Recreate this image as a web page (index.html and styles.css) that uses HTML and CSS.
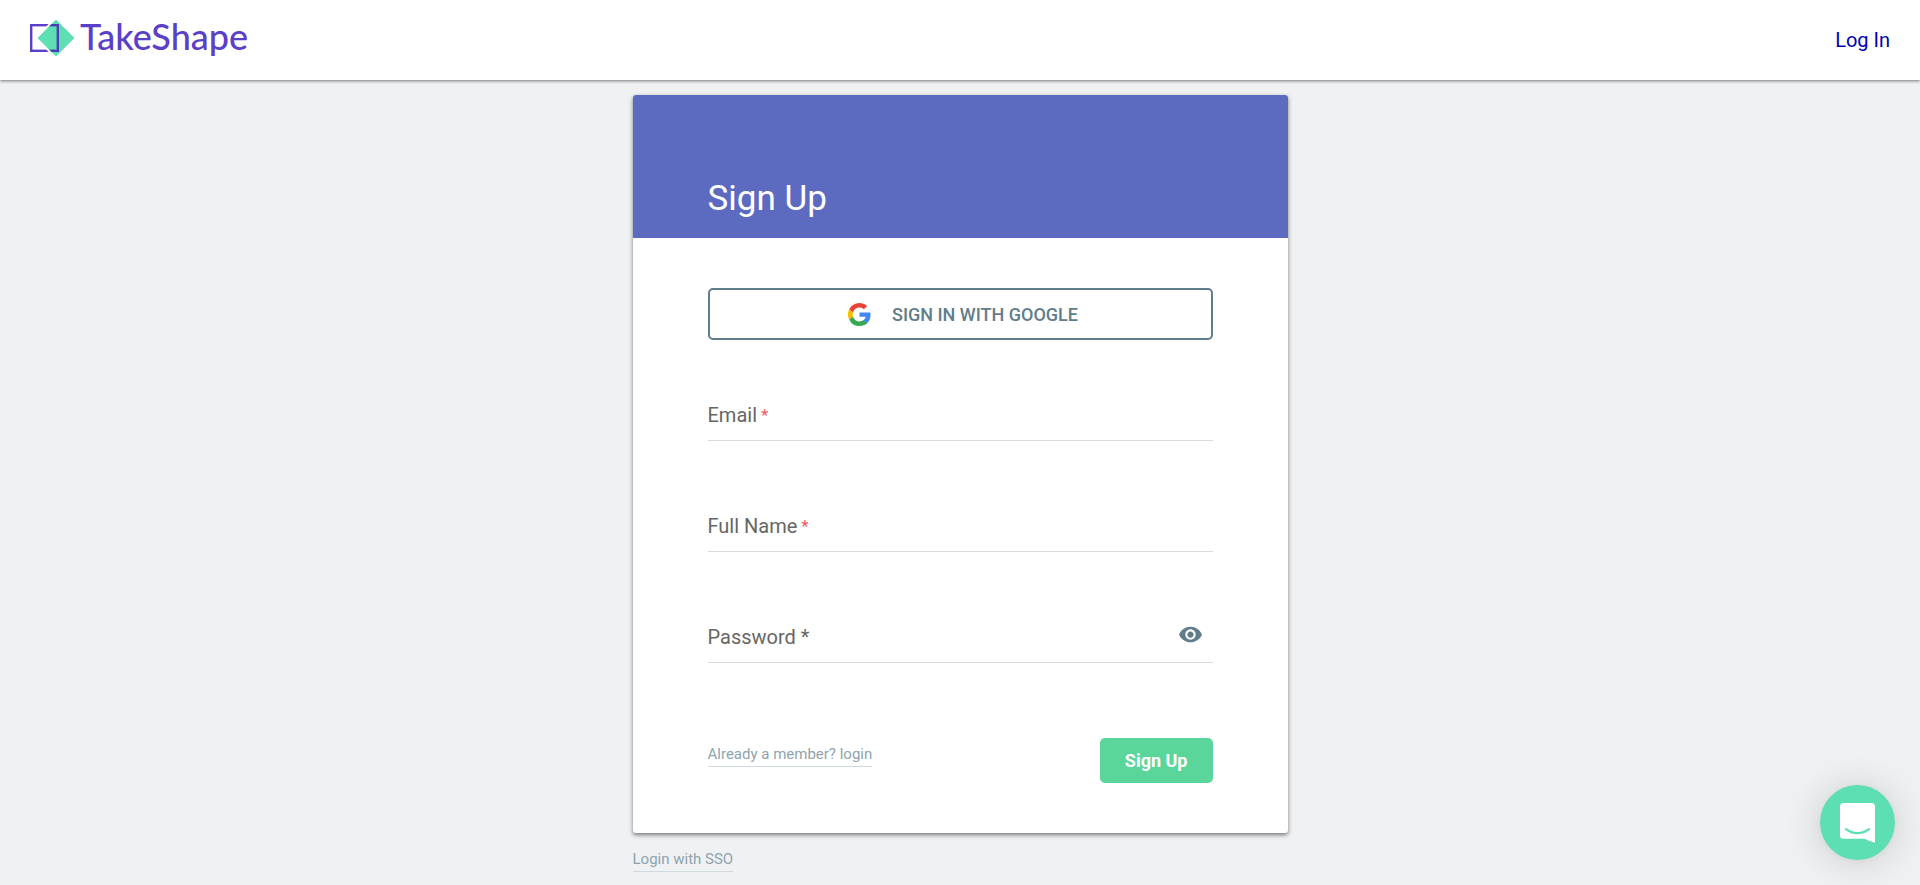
FILE: index.html
```
<!DOCTYPE html>
<html lang="en">
<head>
    <meta charset="UTF-8">
    <meta name="viewport" content="width=device-width, initial-scale=1.0">
    <title>Sign Up - TakeShape</title>
    <link rel="stylesheet" href="styles.css">
</head>
<body>
    <header class="topbar">
        <a class="logo" href="#">
            <svg width="46" height="40" viewBox="0 0 46 40" aria-hidden="true">
                <defs>
                    <clipPath id="diamond"><path d="M26 1.500 44.500 20 26 38.500 7.500 20z"/></clipPath>
                </defs>
                <rect x="1.200" y="7.200" width="26.600" height="25.600" fill="none" stroke="#5a3fc8" stroke-width="2.400"/>
                <path d="M26 1.500 44.500 20 26 38.500 7.500 20z" fill="#5edfb3" stroke="#fff" stroke-width="4"/>
                <path d="M26 1.500 44.500 20 26 38.500 7.500 20z" fill="#5edfb3"/>
                <rect x="1.200" y="7.200" width="26.600" height="25.600" fill="none" stroke="#4a3db8" stroke-width="2.400" clip-path="url(#diamond)"/>
            </svg>
            <span class="logo-text">TakeShape</span>
        </a>
        <a class="login" href="#">Log In</a>
    </header>

    <main class="page">
        <div class="card">
            <div class="card-header">
                <h1>Sign Up</h1>
            </div>
            <form class="card-body">
                <button type="button" class="google">
                    <svg width="23" height="23" viewBox="0 0 18 18" aria-hidden="true">
                        <path fill="#4285f4" d="M17.640 9.200c0-.640-.060-1.250-.160-1.840H9v3.480h4.840a4.140 4.140 0 0 1-1.800 2.720v2.260h2.920c1.700-1.570 2.680-3.880 2.680-6.620z"/>
                        <path fill="#34a853" d="M9 18c2.430 0 4.470-.800 5.960-2.180l-2.920-2.260c-.800.540-1.840.860-3.040.860-2.340 0-4.330-1.580-5.040-3.710H.960v2.330A9 9 0 0 0 9 18z"/>
                        <path fill="#fbbc05" d="M3.960 10.710a5.400 5.400 0 0 1 0-3.420V4.960H.960a9 9 0 0 0 0 8.080l3-2.330z"/>
                        <path fill="#ea4335" d="M9 3.580c1.320 0 2.500.450 3.440 1.350l2.580-2.590A9 9 0 0 0 .960 4.960l3 2.330C4.670 5.160 6.660 3.580 9 3.580z"/>
                    </svg>
                    <span>SIGN IN WITH GOOGLE</span>
                </button>

                <div class="field">
                    <input type="email" id="email">
                    <label for="email">Email<span class="required">*</span></label>
                </div>
                <div class="field">
                    <input type="text" id="fullName">
                    <label for="fullName">Full Name<span class="required">*</span></label>
                </div>
                <div class="field">
                    <input type="password" id="password">
                    <label for="password">Password *</label>
                    <button type="button" class="toggle" aria-label="Show password">
                        <svg width="25" height="25" viewBox="0 0 24 24" aria-hidden="true">
                            <path fill="#607d8b" d="M12 4.500C7 4.500 2.730 7.610 1 12c1.730 4.390 6 7.500 11 7.500s9.270-3.110 11-7.500c-1.730-4.390-6-7.500-11-7.500zM12 17c-2.760 0-5-2.240-5-5s2.240-5 5-5 5 2.240 5 5-2.240 5-5 5zm0-8c-1.660 0-3 1.340-3 3s1.340 3 3 3 3-1.340 3-3-1.340-3-3-3z"/>
                        </svg>
                    </button>
                </div>

                <div class="actions">
                    <a class="small-link" href="#">Already a member? login</a>
                    <button type="submit" class="submit">Sign Up</button>
                </div>
            </form>
        </div>
        <div class="sso">
            <a class="small-link" href="#">Login with SSO</a>
        </div>
    </main>

    <button type="button" class="launcher" aria-label="Open chat">
        <svg width="35" height="40" viewBox="0 0 28 32" aria-hidden="true">
            <path fill="#fff" d="M28 32s-4.714-1.855-8.527-3.340H2.500C1.120 28.660 0 27.500 0 26.160V2.500C0 1.120 1.120 0 2.500 0h23C26.880 0 28 1.120 28 2.500V32z"/>
            <path fill="none" stroke="#5edfb3" stroke-width="1.800" stroke-linecap="round" d="M4.800 20.900c5.400 4.200 13 4.200 18.400 0"/>
        </svg>
    </button>
</body>
</html>
```
FILE: styles.css
```
* {
    box-sizing: border-box;
}
body {
    margin: 0;
    font-family: Roboto, sans-serif;
    font-size: 20px;
    background-color: #eff1f3;
}
button {
    font-family: inherit;
    cursor: pointer;
}
.topbar {
    display: flex;
    align-items: center;
    justify-content: space-between;
    height: 80px;
    padding: 0 30px;
    background-color: white;
    box-shadow: 0 1px 3px rgba(0,0,0,0.5);
}
.logo {
    display: flex;
    align-items: center;
    gap: 4px;
    padding-bottom: 5px;
    text-decoration: none;
}
.logo-text {
    padding-bottom: 3px;
    font-family: Lato, sans-serif;
    font-size: 36px;
    font-weight: 500;
    line-height: 37px;
    color: #5a3fc8;
}
.login {
    color: #0000b4;
    text-decoration: none;
}
.page {
    max-width: 655px;
    margin: 15px auto 0;
}
.card {
    background-color: white;
    border-radius: 3px;
    box-shadow: 0 2px 4px rgba(0,0,0,0.5);
    overflow: hidden;
}
.card-header {
    padding: 81px 75px 17px;
    background-color: #5c6bc0;
}
h1 {
    margin: 0;
    font-size: 35px;
    font-weight: 400;
    line-height: 45px;
    color: white;
}
.card-body {
    display: flex;
    flex-direction: column;
    gap: 60px;
    padding: 50px 75px;
}
.google {
    display: flex;
    align-items: center;
    justify-content: center;
    gap: 21px;
    height: 52px;
    margin-bottom: -10px;
    padding: 0 0 0 6px;
    font-size: 18px;
    font-weight: 500;
    color: #607d8b;
    background: none;
    border: 2px solid #607d8b;
    border-radius: 5px;
}
.field {
    position: relative;
}
.field input {
    display: block;
    width: 100%;
    height: 51px;
    padding: 0;
    font: inherit;
    background: none;
    border: none;
    border-bottom: 1px solid #d9dcdd;
    outline: none;
}
/* label sits over the empty input */
.field label {
    position: absolute;
    top: 0;
    left: 0;
    line-height: 50px;
    color: #666;
}
.required {
    margin-left: 4px;
    font-size: 17px;
    vertical-align: 1px;
    color: #ef5b60;
}
.toggle {
    position: absolute;
    top: 0;
    right: 0;
    display: flex;
    align-items: center;
    height: 45px;
    padding: 0 10px;
    background: none;
    border: none;
}
.actions {
    display: flex;
    align-items: flex-start;
    justify-content: space-between;
    padding-top: 15px;
}
.small-link {
    display: inline-block;
    padding: 6px 0 2px;
    font-size: 15px;
    line-height: 20px;
    color: #90a4ae;
    text-decoration: none;
    border-bottom: 1px solid #cfd8dc;
}
.submit {
    height: 45px;
    padding: 0 25px;
    font-size: 18px;
    font-weight: 700;
    color: white;
    background-color: #5bd69b;
    border: none;
    border-radius: 5px;
}
.sso {
    display: flex;
    padding-top: 10px;
}
.launcher {
    position: fixed;
    right: 25px;
    bottom: 25px;
    display: flex;
    align-items: center;
    justify-content: center;
    width: 75px;
    height: 75px;
    padding: 0;
    background-color: #5edfb3;
    border: none;
    border-radius: 50%;
    box-shadow: 0 1px 7px rgba(0,0,0,0.06), 0 2px 40px rgba(0,0,0,0.16);
}
```
